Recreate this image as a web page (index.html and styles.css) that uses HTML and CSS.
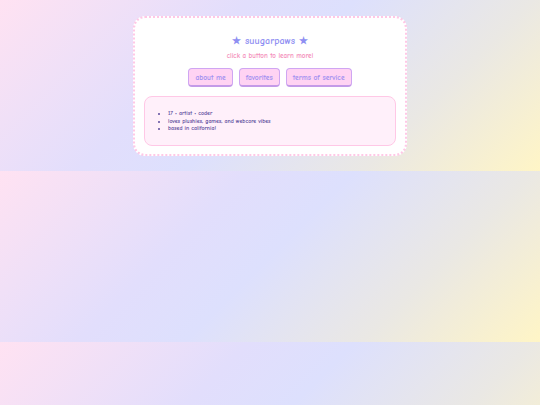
FILE: index.html
```html
<!DOCTYPE html>
<html lang="en">
<head>
<meta charset="utf-8">
<title>suugarpaws</title>
<link rel="stylesheet" href="styles.css">
</head>
<body>
  <main class="card">
    <h1 class="title">★ suugarpaws ★</h1>
    <p class="subtitle">click a button to learn more!</p>
    <nav class="buttons">
      <button class="btn">about me</button>
      <button class="btn">favorites</button>
      <button class="btn">terms of service</button>
    </nav>
    <section class="panel">
      <ul class="facts">
        <li>17 • artist • coder</li>
        <li>loves plushies, games, and webcore vibes</li>
        <li>based in california!</li>
      </ul>
    </section>
  </main>
</body>
</html>
```
FILE: styles.css
```css
html {
  background: linear-gradient(135deg, #ffe2f2 0%, #e2defc 35%, #dde0fd 50%, #eae8e4 75%, #fff5c6 100%);
}
body {
  margin: 0;
  padding: 16px 0 15px;
  font-family: "Comic Sans MS", "Comic Neue", "Chalkboard SE", cursive;
  font-weight: bold;
}
.card {
  box-sizing: border-box;
  width: 274px;
  margin: 0 auto;
  background: #ffffff;
  border: 2px dotted #ffc8e6;
  border-radius: 12px;
  padding: 16px 9px 8px;
  text-align: center;
}
.title {
  margin: 0;
  font-size: 10px;
  line-height: 14px;
  font-weight: bold;
  color: #8f8ff2;
}
.subtitle {
  margin: 4px 0 0;
  font-size: 7px;
  line-height: 9px;
  color: #f490bb;
}
.buttons {
  display: flex;
  justify-content: center;
  gap: 6px;
  margin-top: 7px;
}
.btn {
  font-family: inherit;
  font-weight: bold;
  font-size: 7.5px;
  line-height: 9px;
  color: #a290f0;
  background: #ffd3f3;
  border: 1px solid #cfa6f2;
  border-bottom: 2px solid #c49ae8;
  border-radius: 4px;
  padding: 4px 6px 3px;
  height: 19px;
}
.panel {
  margin-top: 9px;
  background: #fff0fa;
  border: 1.5px solid #ffc8e6;
  border-radius: 8px;
  padding: 13px 10px 12px;
  text-align: left;
}
.facts {
  margin: 0;
  padding-left: 13px;
  font-size: 5.85px;
  line-height: 7.5px;
  color: #5c4c9c;
}
```
